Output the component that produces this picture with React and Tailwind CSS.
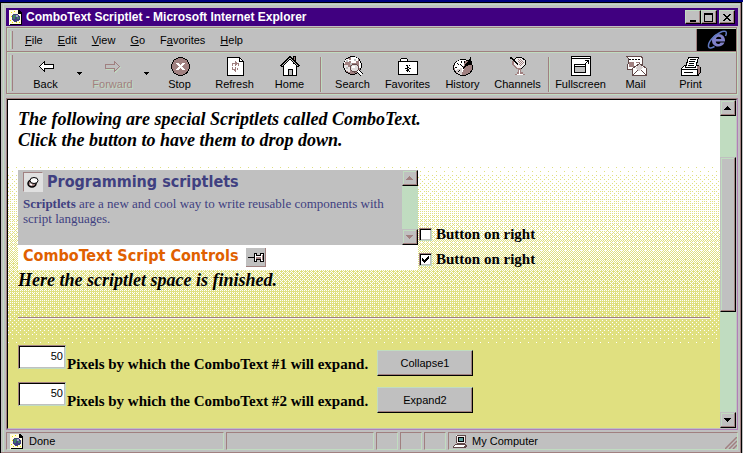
import React from "react";

const raised =
  "border border-t-[#c0dcc0] border-l-[#c0dcc0] border-r-black border-b-black bg-[#c0c0c0] shadow-[inset_-1px_-1px_0_#a08080]";
const raisedSoft =
  "border border-t-[#c0c0c0] border-l-[#c0c0c0] border-r-black border-b-black bg-[#c0c0c0] shadow-[inset_-1px_-1px_0_#a08080,inset_1px_1px_0_#c0dcc0]";
const sunken =
  "border border-t-[#a08080] border-l-[#a08080] border-r-[#c0dcc0] border-b-[#c0dcc0]";

/* 8x8 ordered-dither matrix, used for the page's fading backdrop */
const BAYER = [
  [0, 32, 8, 40, 2, 34, 10, 42],
  [48, 16, 56, 24, 50, 18, 58, 26],
  [12, 44, 4, 36, 14, 46, 6, 38],
  [60, 28, 52, 20, 62, 30, 54, 22],
  [3, 35, 11, 43, 1, 33, 9, 41],
  [51, 19, 59, 27, 49, 17, 57, 25],
  [15, 47, 7, 39, 13, 45, 5, 37],
  [63, 31, 55, 23, 61, 29, 53, 21],
];
const FADE_START = 64;
const FADE_LENGTH = 184;

/* Each dotted line starts at its matrix column; an "1 7" dash repeats it every 8 pixels */
function ditherPath() {
  let d = "";
  for (let y = FADE_START; y < FADE_START + FADE_LENGTH; y++) {
    const level = ((y - FADE_START) / FADE_LENGTH) * 64;
    for (let x = 0; x < 8; x++) {
      if (level <= BAYER[(y + 5) % 8][x]) d += `M${x} ${y + 0.5}h2000`;
    }
  }
  return d;
}
const DITHER = ditherPath();

function Backdrop() {
  return (
    <svg className="absolute inset-0 h-full w-full" shapeRendering="crispEdges" aria-hidden="true">
      <rect width="100%" height="100%" fill="#e0e080" />
      <rect width="100%" height={FADE_START} fill="#fff" />
      <path d={DITHER} fill="none" stroke="#fff" strokeDasharray="1 7" />
    </svg>
  );
}

function PageIcon() {
  return (
    <svg width="13" height="15" viewBox="0 0 13 15" shapeRendering="crispEdges" aria-hidden="true">
      <path d="M0 0h10l3 3v12H0z" fill="#fffbe0" />
      <path d="M10 0h1v1h1v1h1v13H1v-1h11V4H9V0z" fill="#000" />
      <path d="M2 2h1v1H2zM5 1h1v1H5zM2 6h1v1H2zM1 10h1v1H1zM3 12h1v1H3zM7 12h1v1H7zM10 12h1v1h-1zM10 6h1v1h-1z" fill="#e0e000" />
      <path d="M4 4h5v1h1v1h1v4h-1v1H8v1H5v-1H4v-1H3V5h1z" fill="#404080" />
      <path d="M4 5h3v2H6v2H4zM8 7h2v2H8z" fill="#408060" />
      <path d="M7 5h2v2H7z" fill="#a0a0d0" />
    </svg>
  );
}

function Icon({ children }) {
  return (
    <svg width="22" height="20" viewBox="0 0 22 20" shapeRendering="crispEdges" aria-hidden="true">
      {children}
    </svg>
  );
}

const icons = {
  back: (
    <Icon>
      <path d="M4.500 10.500L9.500 5.500V8.500H18.500V12.500H9.500V15.500Z" fill="#fff" stroke="#000" />
    </Icon>
  ),
  forward: (
    <Icon>
      <path d="M18.500 11.500L13.500 6.500V9.500H4.500V13.500H13.500V16.500Z" fill="none" stroke="#c0dcc0" />
      <path d="M17.500 10.500L12.500 5.500V8.500H3.500V12.500H12.500V15.500Z" fill="#c0c0c0" stroke="#a08080" />
    </Icon>
  ),
  stop: (
    <Icon>
      <circle cx="11.500" cy="10.500" r="9" fill="#a08080" stroke="#000" />
      <path d="M7 7h3v1h1v1h1V8h1V7h3v1h-1v1h-1v1h-1v1h1v1h1v1h1v1h-3v-1h-1v-1h-1v1h-1v1H7v-1h1v-1h1v-1h1v-1H9V9H8V8H7z" fill="#fff" />
    </Icon>
  ),
  refresh: (
    <Icon>
      <path d="M3.500 1.500H15.500L19.500 5.500V19.500H3.500Z" fill="#fff" stroke="#000" />
      <path d="M15.500 1.500V5.500H19.500" fill="none" stroke="#000" />
      <path d="M11 5h1v1h1v1h2v3h-1V8h-1v1h-1v1h-1V8H9v2H8V7h3zM8 11h1v2h2v-2h1v5h-1v-1h-1v-1H8zM13 12h1v2h-1z" fill="#a08080" />
    </Icon>
  ),
  home: (
    <Icon>
      <path d="M4 10L11 3L18 10V19.500H4Z" fill="#fff" />
      <path d="M14.500 .5h2v7h-2z" fill="#a08080" stroke="#000" />
      <path d="M4.500 10V19.500H17.500V10M9.500 19V13.500H13.500V19" fill="none" stroke="#000" />
      <path d="M10 14h3v5h-3z" fill="#c0c0c0" />
      <path d="M2 10.500L11 1.500L20 10.500" fill="none" stroke="#000" strokeWidth="3" />
      <path d="M3 10L11 2L19 10" fill="none" stroke="#c0c0c0" />
    </Icon>
  ),
  search: (
    <Icon>
      <circle cx="10.500" cy="9.500" r="9" fill="#a08080" stroke="#000" />
      <path d="M4 3h3v3H3v2H2V6h1V4h1zM9 1h5v1h2v3h-2v2H9V5H7V4h2zM17 5h1v2h1v5h-2z" fill="#fff" />
      <path d="M2 9h4v2h2v5H6v-1H4v-1H3v-2H2z" fill="#e8e4e4" />
      <path d="M4 4h2v2H4zM8 7h2v2H8zM12 3h2v2h-2zM4 11h2v2H4z" fill="#c0c0c0" />
      <circle cx="12.500" cy="12" r="4" fill="#e0dcdc" stroke="#604848" />
      <path d="M10 10h3v2h-3z" fill="#fff" />
      <path d="M16 15L20 19" stroke="#000" strokeWidth="4" />
      <path d="M16 15L20 19" stroke="#fff" strokeWidth="2" />
    </Icon>
  ),
  favorites: (
    <Icon>
      <path d="M1.500 5.500H20.500V18.500H1.500ZM3.500 5.500V3.500L4.500 2.500H9.500L11.500 5.500" fill="#fff" stroke="#000" />
      <path d="M10 9h1v2h1V9h1v1h-1v2h2v1h-2v2h1v1h-1v-1h-1v1h-1v-1H9v-1h1v-1H8v-1h2v-2H9v-1h1z" fill="#000" />
      <path d="M11 12h1v1h-1z" fill="#fff" />
    </Icon>
  ),
  history: (
    <Icon>
      <ellipse cx="11" cy="11.500" rx="9.500" ry="8" fill="#a08080" stroke="#000" />
      <path d="M11 11L14 4H8L4 6L2 11L4 15L9 19L12 13Z" fill="#fff" />
      <path d="M3 14l7-2v7l-4-1z" fill="#d8d0d0" />
      <path d="M5 7h1v1h1v1H6V8H5zM9 5h1v2H9zM3 11h2v1H3zM6 15h1v-1h1v1H7v1H6zM8 8h1v1h1v1h1v1h-1v-1H9V9H8zM12 5h1v2h-1z" fill="#000" />
      <path d="M11 12L18 2V1h1v4h1v3l-5 2-4 3z" fill="#000" />
    </Icon>
  ),
  channels: (
    <Icon>
      <path d="M7.500 3.500L9.500 1.500H14.500L18.500 4.500V8.500L14.500 12.500H10.500L6.500 8.500Z" fill="#f0ecec" stroke="#000" />
      <path d="M11 3h1v1h-1zM13 3h1v1h-1zM12 4h1v1h-1zM14 4h1v1h-1zM11 5h1v1h-1zM13 5h1v1h-1zM15 5h1v1h-1zM12 6h1v1h-1zM14 6h1v1h-1zM16 6h1v1h-1zM13 7h1v1h-1zM15 7h1v1h-1zM12 8h1v1h-1zM14 8h1v1h-1zM13 9h1v1h-1z" fill="#a08080" />
      <path d="M5 5h2v4l4 3h3v1h-4L5 9zM11 13h3v3h2v2h2v1H8v-1h2v-2h1z" fill="#a08080" />
      <path d="M3 1h2v1h1v1h1v1h1v1h1v1h1v1h1v2h-1V8H9V7H8V6H7V5H6V4H5V3H3z" fill="#000" />
      <path d="M12 14h1v4h3v1h-6v-1h2z" fill="#fff" />
    </Icon>
  ),
  fullscreen: (
    <Icon>
      <path d="M1.500 .5H20.500V19.500H1.500Z" fill="#fff" stroke="#000" />
      <path d="M2 2h18v1H2z" fill="#000" />
      <path d="M4 8h12v9H4z" fill="#000" />
      <path d="M5 9h10v1H5z" fill="#fff" />
      <path d="M5 11h10v5H5z" fill="#c0c0c0" />
      <path d="M15 4h4v4h-1V6h-1v1h-1v1h-1V7h1V6h1V5h-2z" fill="#000" />
    </Icon>
  ),
  mail: (
    <Icon>
      <path d="M3.500 2.500L1.500 .5H16.500L17.500 2.500V13.500H2.500Z" fill="#fff" stroke="#604848" />
      <path d="M4 3h2v1H4zM7 3h2v1H7zM10 3h2v1h-2zM13 3h2v1h-2z" fill="#000" />
      <path d="M4 6h5v5H4zM11 6h4v1h-4z" fill="#a08080" />
      <path d="M7.500 12.500L14.500 7.500L21.500 12.500V19.500H7.500Z" fill="#fff" stroke="#604848" />
      <path d="M10 12l4-4 4 4-4 3z" fill="#d8d0d0" />
      <path d="M8 19L13 14M21 19L16 14M8 19.500h13" stroke="#604848" fill="none" />
    </Icon>
  ),
  print: (
    <Icon>
      <path d="M1.500 12.500L5 9H18L20.500 12V16L18 19.500H1.500Z" fill="#fff" stroke="#000" />
      <path d="M17 10h3v6l-3 3z" fill="#a08080" />
      <path d="M5.500 11.500L8.500 1.500H18.500L15.500 11.500Z" fill="#fff" stroke="#000" />
      <path d="M10 3h6v1h-6zM9 5h6v1H9zM9 7h5v1H9zM8 9h6v1H8z" fill="#000" />
      <path d="M2 13h15v1H2zM4 16h9v1H4zM17 13h1v6h-1z" fill="#000" />
    </Icon>
  ),
};

function ToolButton({ icon, label, disabled }) {
  return (
    <button
      disabled={disabled}
      className={
        "flex w-[55px] shrink-0 flex-col items-center leading-4 " +
        (disabled ? "text-[#a08080] [text-shadow:1px_1px_0_#c0dcc0]" : "")
      }
    >
      {icons[icon]}
      <span>{label}</span>
    </button>
  );
}

function MoreButton({ label }) {
  return (
    <button aria-label={label} className="flex w-3 shrink-0 justify-center pt-4">
      <svg width="7" height="4" viewBox="0 0 7 4" shapeRendering="crispEdges" aria-hidden="true">
        <path d="M1 0h5v1H5v1H4v1H3V2H2V1H1z" />
      </svg>
    </button>
  );
}

function Divider() {
  return (
    <div className="flex w-2 shrink-0 justify-center py-px">
      <div className="w-[2px] border-l border-r border-l-[#a08080] border-r-[#c0dcc0]" />
    </div>
  );
}

function Grip() {
  return <div className="my-0.5 ml-0.5 w-[3px] border-l border-r border-l-[#c0dcc0] border-r-[#a08080]" />;
}

function ScrollArrow({ down, dim, label }) {
  return (
    <button
      aria-label={label}
      className={"flex h-4 w-4 shrink-0 items-center justify-center " + raisedSoft}
    >
      <svg width="8" height="5" viewBox="0 0 8 5" shapeRendering="crispEdges" aria-hidden="true">
        <path
          d={down ? "M0 0h7v1H6v1H5v1H4v1H3V3H2V2H1V1H0z" : "M3 0h1v1h1v1h1v1h1v1H0V3h1V2h1V1h1z"}
          fill={dim ? "#a08080" : "#000"}
        />
      </svg>
    </button>
  );
}

function CheckRow({ id, checked }) {
  return (
    <div className="flex items-center gap-1 pl-px">
      <span className="relative flex h-[13px] w-[13px]">
        <input
          id={id}
          type="checkbox"
          defaultChecked={checked}
          className="peer h-[13px] w-[13px] appearance-none border border-t-[#a08080] border-l-[#a08080] border-r-[#c0dcc0] border-b-[#c0dcc0] bg-white shadow-[inset_1px_1px_0_#000,inset_-1px_-1px_0_#c0c0c0]"
        />
        <svg
          className="pointer-events-none absolute top-[3px] left-[3px] hidden peer-checked:block"
          width="7"
          height="7"
          viewBox="0 0 7 7"
          shapeRendering="crispEdges"
          aria-hidden="true"
        >
          <path d="M0 2h1v1h1v1h1V3h1V2h1V1h1V0h1v3H6v1H5v1H4v1H3v1H2V6H1V5H0z" />
        </svg>
      </span>
      <label htmlFor={id} className="leading-4 font-bold">
        Button on right
      </label>
    </div>
  );
}

function ExpandRow({ id, number, action }) {
  return (
    <div className="flex h-[31px] items-end">
      <input
        id={id}
        type="text"
        defaultValue="50"
        className={
          "h-6 w-12 self-start bg-white pr-0.5 pb-0.5 text-right font-['Liberation_Sans',sans-serif] text-[11px] shadow-[inset_1px_1px_0_#000,inset_-1px_-1px_0_#c0c0c0] " +
          sunken
        }
      />
      <label htmlFor={id} className="w-[311px] pl-px leading-6 font-bold whitespace-nowrap">
        Pixels by which the ComboText #{number} will expand.
      </label>
      <button
        className={"h-[26px] w-24 font-['Liberation_Sans',sans-serif] text-[11px] " + raised}
      >
        {action}
      </button>
    </div>
  );
}

function TitleButton({ label, children }) {
  return (
    <button aria-label={label} className={"flex h-[14px] w-4 items-center justify-center " + raised}>
      <svg width="10" height="9" viewBox="0 0 10 9" shapeRendering="crispEdges" aria-hidden="true">
        {children}
      </svg>
    </button>
  );
}

export default function App() {
  return (
    <div className="flex min-h-screen flex-col border-t-2 border-t-[#000080] bg-[#c0c0c0] font-['Liberation_Sans',sans-serif] text-[11px] text-black">
      <div className="mr-px flex flex-1 flex-col border-t border-r border-l border-black">
        <div className="flex flex-1 flex-col border-r border-b border-[#a08080] pt-px">
          <div className="ml-0.5 flex flex-1 flex-col border-t border-l border-[#c0dcc0] pt-[3px] pr-0.5 pb-0.5 pl-0.5">
            <header className="flex h-[18px] items-center gap-1 bg-[#400080] pr-[3px] pl-[3px]">
              <PageIcon />
              <h1 className="flex-1 text-[12px] font-bold whitespace-nowrap text-white">
                ComboText Scriptlet - Microsoft Internet Explorer
              </h1>
              <div className="flex">
                <TitleButton label="Minimize">
                  <path d="M2 7h6v2H2z" />
                </TitleButton>
                <TitleButton label="Maximize">
                  <path d="M0 0h9v9H0zM1 2v6h7V2z" fillRule="evenodd" />
                </TitleButton>
                <div className="w-0.5" />
                <TitleButton label="Close">
                  <path d="M1 1h2v1h1v1h2V2h1V1h2v1H8v1H7v1H6v1h1v1h1v1h1v1H7V7H6V6H4v1H3v1H1V7h1V6h1V5h1V4H3V3H2V2H1z" />
                </TitleButton>
              </div>
            </header>

            <div className="mt-px mr-px border border-[#a08080] shadow-[1px_1px_0_#c0dcc0,inset_1px_1px_0_#c0dcc0]">
              <div className="flex h-6 border-b border-[#a08080] pt-px pl-px">
                <Grip />
                <nav className="flex flex-1 items-center gap-[15px] pl-3">
                  <button><u>F</u>ile</button>
                  <button><u>E</u>dit</button>
                  <button><u>V</u>iew</button>
                  <button><u>G</u>o</button>
                  <button>F<u>a</u>vorites</button>
                  <button><u>H</u>elp</button>
                </nav>
                <div className="flex w-10 justify-center border-l border-[#a08080] bg-black">
                  <svg width="22" height="22" viewBox="0 0 22 22" aria-label="Internet Explorer" role="img">
                    <path
                      d="M12.500 5C8.500 5 6 8 6 11.500C6 15 8.500 17.500 12 17.500C15 17.500 17.500 16 18.500 13.500H14.500C14 14.500 13.200 15 12.200 15C10.800 15 9.800 14 9.800 12.500H19C19.500 8 16.500 5 12.500 5ZM10 10C10.300 8.500 11.300 7.700 12.700 7.700C14.200 7.700 15.200 8.500 15.300 10Z"
                      fill="#8080c8"
                      fillRule="evenodd"
                    />
                    <path d="M19.500 7C22 2 18.500 1 14 3.500C7 7 2 13.500 2.500 17.500C3 20 6 19 8.500 17.500" fill="none" stroke="#6078c0" strokeWidth="1.500" />
                  </svg>
                </div>
              </div>
              <div className="flex h-[41px] border-t border-[#c0dcc0] pl-px">
                <Grip />
                <div className="flex flex-1 pt-[3px] pl-[5px]">
                  <ToolButton icon="back" label="Back" />
                  <MoreButton label="Back history" />
                  <ToolButton icon="forward" label="Forward" disabled />
                  <MoreButton label="Forward history" />
                  <ToolButton icon="stop" label="Stop" />
                  <ToolButton icon="refresh" label="Refresh" />
                  <ToolButton icon="home" label="Home" />
                  <Divider />
                  <ToolButton icon="search" label="Search" />
                  <ToolButton icon="favorites" label="Favorites" />
                  <ToolButton icon="history" label="History" />
                  <ToolButton icon="channels" label="Channels" />
                  <Divider />
                  <ToolButton icon="fullscreen" label="Fullscreen" />
                  <ToolButton icon="mail" label="Mail" />
                  <ToolButton icon="print" label="Print" />
                </div>
              </div>
            </div>

            <div className="mt-1 flex flex-1 border border-t-[#a08080] border-r-[#b080b8] border-b-[#b080b8] border-l-[#a08080]">
              <div className="flex flex-1 border border-t-black border-r-[#c0c0c0] border-b-[#c0c0c0] border-l-black">
                <main className="relative flex-1">
                  <Backdrop />
                  <div className="relative pt-[9px] pr-[10px] pb-[14px] pl-[10px] font-['Liberation_Serif',serif] text-[15px]">
                    <p className="text-[18px] leading-[21px] font-bold italic">
                      The following are special Scriptlets called ComboText.
                      <br />
                      Click the button to have them to drop down.
                    </p>

                    <div className="mt-[19px] flex items-end">
                      <section className="flex h-[75px] w-[400px] bg-[#c0c0c0] text-[#404080]">
                        <div className="flex-1 pt-0.5 pl-[5px]">
                          <div className="flex items-center gap-1">
                            <button
                              aria-label="Collapse Programming scriptlets"
                              className="flex h-5 w-5 items-center justify-center border border-t-[#a08080] border-l-[#a08080] border-r-[#e0e0e0] border-b-[#e0e0e0] bg-[#e0e0e0]"
                            >
                              <svg width="12" height="12" viewBox="0 0 12 12" aria-hidden="true">
                                <ellipse cx="5" cy="7.500" rx="4" ry="3.500" fill="#a08080" stroke="#000" strokeWidth="1.500" />
                                <ellipse cx="7" cy="4.500" rx="4" ry="3" fill="#fff" stroke="#000" />
                                <path d="M3 8l2 1" stroke="#fff" strokeWidth="1.500" />
                              </svg>
                            </button>
                            <h2 className="font-['DejaVu_Sans_Condensed','DejaVu_Sans',sans-serif] text-[16px] leading-5 font-bold">
                              Programming scriptlets
                            </h2>
                          </div>
                          <p className="mt-1 text-[13px] leading-[15px]">
                            <b>Scriptlets</b> are a new and cool way to write reusable components with
                            <br />
                            script languages.
                          </p>
                        </div>
                        <div className="flex flex-col bg-[#c0dcc0]">
                          <ScrollArrow dim label="Scroll text up" />
                          <div className="flex-1" />
                          <ScrollArrow dim down label="Scroll text down" />
                        </div>
                      </section>
                      <div className="pb-[3px]">
                        <CheckRow id="right1" />
                      </div>
                    </div>

                    <div className="flex items-end">
                      <section className="flex h-[25px] w-[400px] items-start gap-2 bg-white pl-[5px]">
                        <h2 className="font-['DejaVu_Sans_Condensed','DejaVu_Sans',sans-serif] text-[16px] leading-[22px] font-bold text-[#e06000]">
                          ComboText Script Controls
                        </h2>
                        <button
                          aria-label="Expand ComboText Script Controls"
                          className="mt-[3px] flex h-[19px] w-5 items-center justify-center border-r border-b border-[#a08080] bg-[#c0c0c0]"
                        >
                          <svg width="16" height="11" viewBox="0 0 16 11" shapeRendering="crispEdges" aria-hidden="true">
                            <path d="M0 5h7v1H0z" />
                            <path d="M6.500 1.500H8.500V3.500H12.500V1.500H15.500V9.500H12.500V7.500H8.500V9.500H6.500Z" fill="#fff" stroke="#000" />
                            <path d="M8 5h5v2H8zM14 3h1v5h-1z" fill="#a08080" />
                          </svg>
                        </button>
                      </section>
                      <div className="pb-[3px]">
                        <CheckRow id="right2" checked />
                      </div>
                    </div>

                    <p className="text-[18px] leading-[21px] font-bold italic">
                      Here the scriptlet space is finished.
                    </p>
                    <hr className="mt-[26px] border-t border-b border-t-[#a08080] border-b-[#f8f8f0]" />
                    <form className="mt-[26px] flex flex-col gap-1.5" onSubmit={(e) => e.preventDefault()}>
                      <ExpandRow id="pixels1" number="1" action="Collapse1" />
                      <ExpandRow id="pixels2" number="2" action="Expand2" />
                    </form>
                  </div>
                </main>
                <div className="flex w-4 flex-col bg-[#c0dcc0]">
                  <ScrollArrow label="Scroll page up" />
                  <div className="h-[41px]" />
                  <div className={"h-[155px] " + raisedSoft} />
                  <div className="flex-1" />
                  <ScrollArrow down label="Scroll page down" />
                </div>
              </div>
            </div>

            <footer className="mt-0.5 flex h-[18px] gap-0.5">
              <div className={"flex w-[218px] items-center gap-1.5 pl-[3px] " + sunken}>
                <PageIcon />
                <span>Done</span>
              </div>
              <div className={"w-[148px] " + sunken} />
              <div className={"w-[22px] " + sunken} />
              <div className={"w-[22px] " + sunken} />
              <div className={"w-[22px] " + sunken} />
              <div className={"flex flex-1 items-center gap-1 pl-1 " + sunken}>
                <svg width="15" height="13" viewBox="0 0 15 13" shapeRendering="crispEdges" aria-hidden="true">
                  <path d="M3 0h10v8H3z" fill="#f0ecec" />
                  <path d="M4 0h9v1H4zM3 1h1v7H3zM12 1h1v7h-1zM4 8h8v1H4z" fill="#604848" />
                  <path d="M5 2h6v5H5z" fill="#000" />
                  <path d="M6 3h4v3H6z" fill="#60a0a0" />
                  <path d="M2 9h11v1h1v2h-1v1H0v-2h1v-1h1z" fill="#604848" />
                  <path d="M2 10h10v1H2zM1 11h10v1H1z" fill="#fff" />
                </svg>
                <span className="flex-1">My Computer</span>
                <svg width="12" height="12" viewBox="0 0 12 12" className="mt-1" aria-hidden="true">
                  <path d="M0 12L12 0M4 12L12 4M8 12L12 8" stroke="#a08080" strokeWidth="1.500" />
                </svg>
              </div>
            </footer>
          </div>
        </div>
      </div>
    </div>
  );
}
